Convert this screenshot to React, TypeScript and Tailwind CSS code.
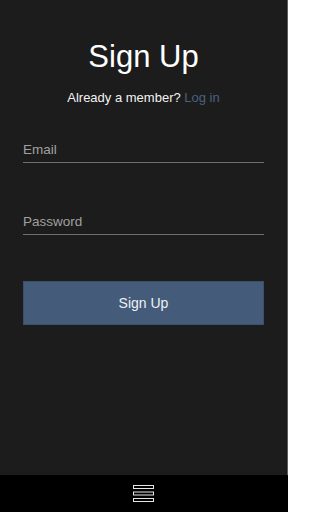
import React from "react";

export default function App() {
  return (
    <div
      className="flex h-[512px] w-[288px] flex-col bg-black"
      style={{ fontFamily: '"Liberation Sans", Arial, sans-serif' }}
    >
      {/* 主体 */}
      <div className="flex flex-1 flex-col border-r border-[#5c5c5c] bg-[#1c1c1c] px-[23px] pr-[23px]">
        <h1 className="mt-[40px] text-center text-[31px] leading-[34px] text-white">
          Sign Up
        </h1>
        <p className="mt-[16px] text-center text-[13px] leading-[16px] text-[#f2f2f2]">
          Already a member? <a className="text-[#4a6182]">Log in</a>
        </p>

        <div className="mt-[36px] border-b border-[#6e6e6e] pb-[4px]">
          <input
            type="email"
            placeholder="Email"
            className="block h-[16px] w-full bg-transparent text-[13.5px] leading-[16px] text-white outline-none placeholder:text-[#a0a0a0]"
          />
        </div>

        <div className="mt-[51px] border-b border-[#6e6e6e] pb-[4px]">
          <input
            type="password"
            placeholder="Password"
            className="block h-[16px] w-full bg-transparent text-[13.5px] leading-[16px] text-white outline-none placeholder:text-[#a0a0a0]"
          />
        </div>

        <button className="mt-[46px] flex h-[44px] w-full items-center justify-center border border-[#3a4f6a] bg-[#445b79] text-[14px] text-[#eef2f7]">
          Sign Up
        </button>
      </div>

      {/* 底部栏 */}
      <div className="flex h-[37px] items-center justify-center bg-black">
        <svg width="22" height="18" viewBox="0 0 22 18" fill="none">
          <rect x="0.5" y="0.5" width="20" height="3" stroke="#e6e6e6" />
          <rect x="0.5" y="7" width="20" height="3" stroke="#e6e6e6" />
          <rect x="0.5" y="13.5" width="20" height="3" stroke="#e6e6e6" />
        </svg>
      </div>
    </div>
  );
}
